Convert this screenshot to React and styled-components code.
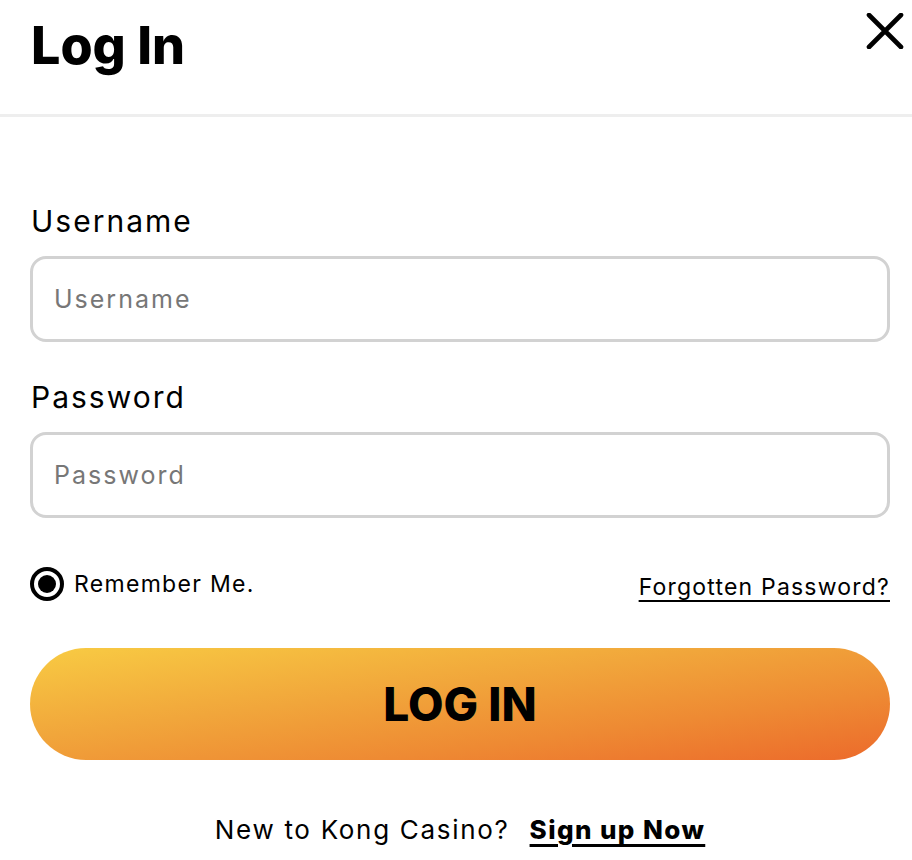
import React, { useState } from 'react';
import styled, { createGlobalStyle } from 'styled-components';

const GlobalStyle = createGlobalStyle`
  * {
    box-sizing: border-box;
  }
  body {
    margin: 0;
    background: #fff;
    font-family: 'Inter', 'Noto Sans', sans-serif;
    color: #000;
  }
`;

function App() {
  const [remember, setRemember] = useState(true);

  return (
    <>
      <GlobalStyle />
      <Modal>
        <Header>
          <Title>Log In</Title>
          <Close aria-label="Close">
            <svg width="38" height="36" viewBox="0 0 38 36">
              <path
                d="M3 2 L35 34 M35 2 L3 34"
                stroke="#000"
                strokeWidth="4.6"
                strokeLinecap="round"
              />
            </svg>
          </Close>
        </Header>
        <Body>
          <Label htmlFor="username">Username</Label>
          <Input id="username" placeholder="Username" />
          <Label htmlFor="password" spaced>
            Password
          </Label>
          <Input id="password" type="password" placeholder="Password" />
          <OptionRow>
            <Remember onClick={() => setRemember(!remember)}>
              <Radio checked={remember} />
              Remember Me.
            </Remember>
            <Forgot href="#">Forgotten Password?</Forgot>
          </OptionRow>
          <Submit>LOG IN</Submit>
          <SignUp>
            New to Kong Casino?
            <SignUpLink href="#">Sign up Now</SignUpLink>
          </SignUp>
        </Body>
      </Modal>
    </>
  );
}

const Modal = styled.div`
  width: 912px;
  min-height: 860px;
  background: #fff;
`;

const Header = styled.header`
  display: flex;
  justify-content: space-between;
  align-items: flex-start;
  height: 117px;
  padding: 0 8px 0 31px;
  border-bottom: 3px solid #eeeeee;
`;

const Title = styled.h1`
  margin: 14px 0 0;
  font-size: 52px;
  font-weight: 800;
  line-height: 64px;
`;

const Close = styled.button`
  display: flex;
  margin-top: 13px;
  padding: 0;
  border: none;
  background: none;
  cursor: pointer;
`;

const Body = styled.div`
  display: flex;
  flex-direction: column;
  padding: 87px 22px 0 30px;
`;

const Label = styled.label`
  margin-top: ${props => (props.spaced ? '38px' : '0')};
  margin-left: 1px;
  font-size: 30px;
  font-weight: 400;
  line-height: 34px;
  letter-spacing: 2px;
`;

const Input = styled.input`
  width: 100%;
  height: 86px;
  margin-top: 18px;
  padding: 0 21px;
  border: 3px solid #d2d2d2;
  border-radius: 16px;
  font-family: inherit;
  font-size: 25px;
  letter-spacing: 2px;
  color: #222;

  &::placeholder {
    color: #777;
  }

  &:focus {
    outline: none;
  }
`;

const OptionRow = styled.div`
  display: flex;
  justify-content: space-between;
  align-items: center;
  height: 34px;
  margin-top: 49px;
`;

const Remember = styled.div`
  display: flex;
  align-items: center;
  gap: 10px;
  font-size: 23px;
  letter-spacing: 1.3px;
  cursor: pointer;
`;

const Radio = styled.span`
  display: flex;
  justify-content: center;
  align-items: center;
  width: 34px;
  height: 34px;
  border: 4px solid #000;
  border-radius: 50%;

  &:after {
    content: '';
    width: 18px;
    height: 18px;
    border-radius: 50%;
    background: ${props => (props.checked ? '#000' : 'transparent')};
  }
`;

const Forgot = styled.a`
  margin-top: 5px;
  font-size: 23px;
  letter-spacing: 1.2px;
  color: #000;
  text-decoration: underline;
  text-underline-offset: 5px;
  text-decoration-thickness: 2px;
`;

const Submit = styled.button`
  width: 100%;
  height: 112px;
  margin-top: 47px;
  border: none;
  border-radius: 56px;
  background: linear-gradient(
    to bottom right,
    #f8cb43 0%,
    #f1a63b 40%,
    #ee8a33 70%,
    #ec6a2b 100%
  );
  font-family: inherit;
  font-size: 46px;
  font-weight: 800;
  color: #000;
  cursor: pointer;
`;

const SignUp = styled.p`
  margin: 53px 0 0;
  text-align: center;
  font-size: 26px;
  line-height: 34px;
  letter-spacing: 1.7px;
`;

const SignUpLink = styled.a`
  margin-left: 20px;
  font-weight: 800;
  letter-spacing: 1.4px;
  color: #000;
  text-decoration: underline;
  text-underline-offset: 5px;
  text-decoration-thickness: 3px;
`;

export default App;
